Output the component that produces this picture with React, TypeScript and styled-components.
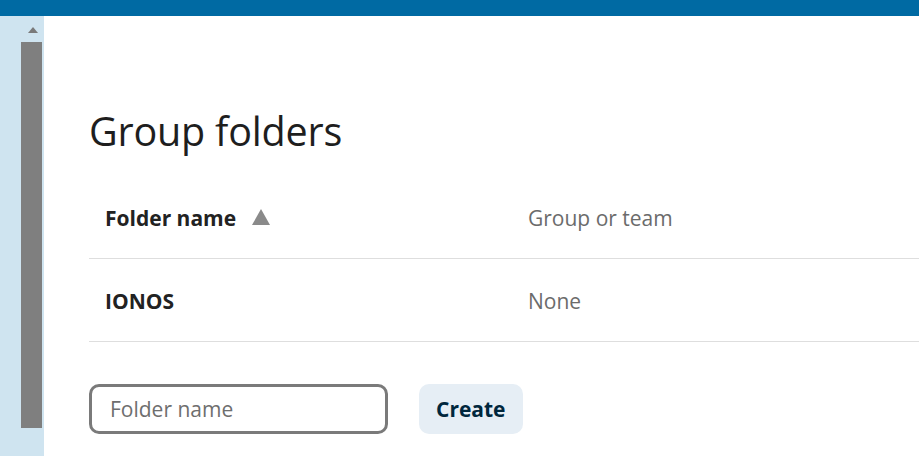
import React from "react";
import styled, { createGlobalStyle } from "styled-components";

const Global = createGlobalStyle`
  html, body { margin: 0; padding: 0; background: #fff; overflow: hidden; }
  body { font-family: "Open Sans", "Noto Sans", sans-serif; }
  * { box-sizing: border-box; }
`;

const Page = styled.div`
  display: flex;
  flex-direction: column;
  width: 919px;
  height: 456px;
  overflow: hidden;
`;

const TopBar = styled.div`
  height: 16px;
  flex: 0 0 16px;
  background: #006aa3;
`;

const Body = styled.div`
  display: flex;
  flex: 1;
  min-height: 0;
`;

const Side = styled.div`
  width: 44px;
  flex: 0 0 44px;
  background: #cfe4f0;
  display: flex;
  flex-direction: column;
  align-items: flex-end;
  padding: 11px 1px 0 0;
`;

const ScrollTrack = styled.div`
  width: 22px;
  display: flex;
  flex-direction: column;
  align-items: center;
`;

const Arrow = styled.div`
  width: 0;
  height: 0;
  border-left: 5px solid transparent;
  border-right: 5px solid transparent;
  border-bottom: 6px solid #7a7a7a;
  margin: 0 0 9px 1px;
`;

const Thumb = styled.div`
  width: 21px;
  height: 386px;
  background: #7f7f7f;
  margin-right: 1px;
`;

const Main = styled.main`
  flex: 1;
  padding: 93px 0 0 45px;
  min-width: 0;
`;

const Title = styled.h2`
  margin: 0;
  font-size: 39.5px;
  line-height: 44px;
  font-weight: 400;
  color: #1e1e1e;
  letter-spacing: -0.2px;
`;

const Table = styled.div`
  margin-top: 23px;
  width: 900px;
`;

const Row = styled.div`
  display: grid;
  grid-template-columns: 423px 1fr;
  height: 83px;
  padding-top: 2px;
  align-items: center;
  border-bottom: 1px solid #dedede;
`;

const Cell = styled.div<{ $muted?: boolean; $bold?: boolean }>`
  padding-left: 16px;
  font-size: 21px;
  color: ${(p) => (p.$muted ? "#6b6b6b" : "#222")};
  font-weight: ${(p) => (p.$bold ? 700 : 400)};
  display: flex;
  align-items: center;
  gap: 16px;
`;

const SortUp = styled.span`
  width: 0;
  height: 0;
  border-left: 9px solid transparent;
  border-right: 9px solid transparent;
  border-bottom: 16px solid #8a8a8a;
  margin-top: -2px;
`;

const Form = styled.form`
  display: flex;
  align-items: center;
  gap: 31px;
  margin-top: 42px;
`;

const Input = styled.input`
  width: 299px;
  height: 50px;
  border: 3px solid #7a7a7a;
  border-radius: 10px;
  padding: 0 18px;
  font-family: inherit;
  font-size: 21px;
  color: #222;
  outline: none;
  &::placeholder { color: #6e6e6e; }
`;

const Button = styled.button`
  height: 50px;
  padding: 0 17px;
  border: none;
  border-radius: 10px;
  background: #e6eef5;
  color: #00273d;
  font-family: inherit;
  font-weight: 700;
  font-size: 21px;
`;

export default function App() {
  return (
    <>
      <Global />
      <Page>
        <TopBar />
        <Body>
          <Side>
            <ScrollTrack>
              <Arrow />
              <Thumb />
            </ScrollTrack>
          </Side>
          <Main>
            <Title>Group folders</Title>
            <Table>
              <Row>
                <Cell $bold>
                  Folder name <SortUp />
                </Cell>
                <Cell $muted>Group or team</Cell>
              </Row>
              <Row>
                <Cell $bold>IONOS</Cell>
                <Cell $muted>None</Cell>
              </Row>
            </Table>
            <Form onSubmit={(e) => e.preventDefault()}>
              <Input placeholder="Folder name" />
              <Button type="button">Create</Button>
            </Form>
          </Main>
        </Body>
      </Page>
    </>
  );
}
